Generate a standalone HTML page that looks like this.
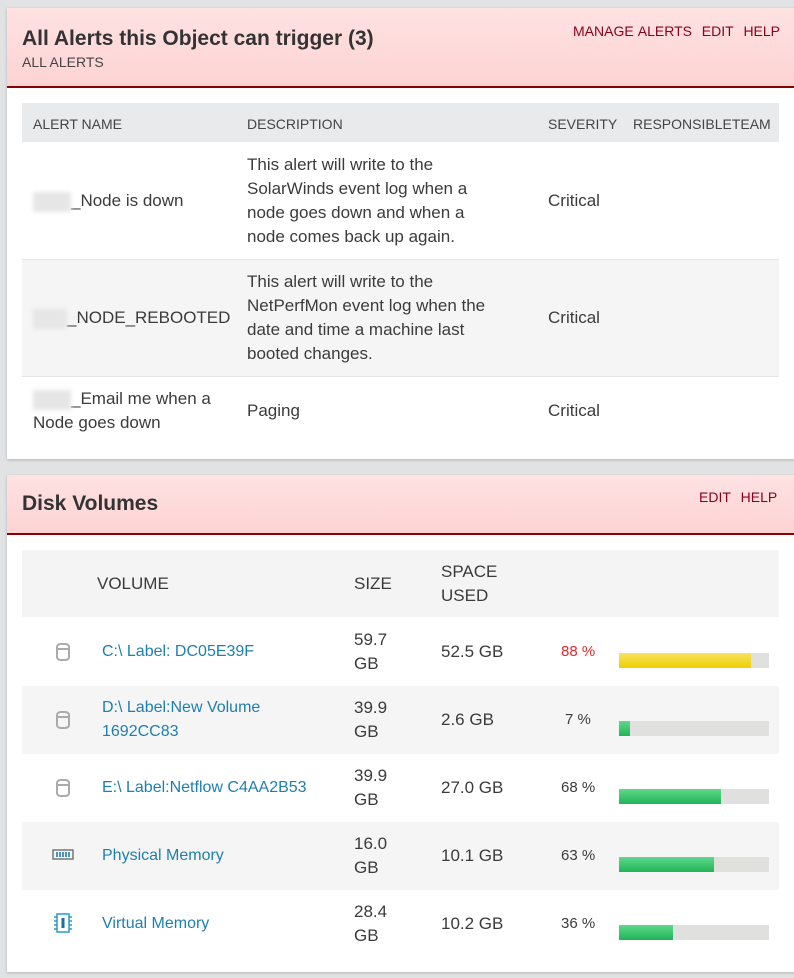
<!DOCTYPE html>
<html><head><meta charset="utf-8"><style>
*{margin:0;padding:0;box-sizing:border-box}
body{width:794px;height:978px;background:#e1e2e3;font-family:"Liberation Sans","DejaVu Sans",sans-serif;color:#3b3b3b;position:relative;overflow:hidden}
.panel{position:absolute;left:7px;width:800px;background:#fff;box-shadow:0 1px 3px rgba(0,0,0,.2)}
.hdr{position:absolute;left:0;top:0;width:100%;background:linear-gradient(#fee2e2,#fdd3d3);border-bottom:2px solid #8b0000}
.title{position:absolute;left:15px;font-weight:bold;font-size:21px;color:#333}
.sub{position:absolute;left:15px;top:46px;font-size:14px;color:#444}
.links{position:absolute;top:15px;font-size:14px;color:#8b0018;word-spacing:1px}
.abs{position:absolute}
.t{position:absolute;font-size:17px;line-height:24px}
.th{position:absolute;font-size:14px;color:#444}
.blur{display:inline-block;width:38px;height:20px;background:#e6e6e6;filter:blur(2px);vertical-align:middle}
a{color:#1e7fae;text-decoration:none}
.bar{position:absolute;left:612px;width:150px;height:15px;background:#e0e0de}
.bar i{display:block;height:100%}
.g{background:linear-gradient(#5fd88c,#20b457)}
.y{background:linear-gradient(#f6e262,#efd000)}
.cyl{position:absolute;left:49px;width:14px;height:18px;border:2px solid #aaa;border-radius:5px/4px}
.cyl:after{content:"";position:absolute;left:-2px;right:-2px;top:3px;border-top:2px solid #aaa}
</style></head><body>
<div class="panel" style="top:8px;height:451px">
 <div class="hdr" style="height:80px"></div>
 <div class="title" style="top:19px">All Alerts this Object can trigger (3)</div>
 <div class="sub">ALL ALERTS</div>
 <div class="links" style="left:566px">MANAGE ALERTS&nbsp; EDIT&nbsp; HELP</div>
 <div class="abs" style="left:15px;top:95px;width:757px;height:39px;background:#e9eaec"></div>
 <div class="th" style="left:26px;top:108px">ALERT NAME</div>
 <div class="th" style="left:240px;top:108px">DESCRIPTION</div>
 <div class="th" style="left:541px;top:108px">SEVERITY</div>
 <div class="th" style="left:626px;top:108px">RESPONSIBLETEAM</div>
 <div class="abs" style="left:15px;top:251px;width:757px;height:118px;background:#f5f5f5;border-top:1px solid #e6e6e6;border-bottom:1px solid #e6e6e6"></div>
 <div class="t" style="left:26px;top:181px"><span class="blur"></span>_Node is down</div>
 <div class="t" style="left:240px;top:145px">This alert will write to the<br>SolarWinds event log when a<br>node goes down and when a<br>node comes back up again.</div>
 <div class="t" style="left:541px;top:181px">Critical</div>
 <div class="t" style="left:26px;top:298px"><span class="blur" style="width:34px"></span>_NODE_REBOOTED</div>
 <div class="t" style="left:240px;top:262px">This alert will write to the<br>NetPerfMon event log when the<br>date and time a machine last<br>booted changes.</div>
 <div class="t" style="left:541px;top:298px">Critical</div>
 <div class="t" style="left:26px;top:379px"><span class="blur"></span>_Email me when a<br>Node goes down</div>
 <div class="t" style="left:240px;top:391px">Paging</div>
 <div class="t" style="left:541px;top:391px">Critical</div>
</div>
<div class="panel" style="top:475px;height:497px">
 <div class="hdr" style="height:60px"></div>
 <div class="title" style="top:17px">Disk Volumes</div>
 <div class="links" style="left:692px;top:14px">EDIT&nbsp; HELP</div>
 <div class="abs" style="left:15px;top:75px;width:757px;height:67px;background:#f4f4f4"></div>
 <div class="t" style="left:90px;top:97px">VOLUME</div>
 <div class="t" style="left:347px;top:97px">SIZE</div>
 <div class="t" style="left:434px;top:85px">SPACE<br>USED</div>
 <div class="abs" style="left:15px;top:211px;width:757px;height:68px;background:#f5f5f5"></div>
 <div class="abs" style="left:15px;top:347px;width:757px;height:68px;background:#f5f5f5"></div>

 <div class="cyl" style="top:168px"></div>
 <div class="t" style="left:95px;top:165px;font-size:16px"><a>C:\ Label: DC05E39F</a></div>
 <div class="t" style="left:347px;top:153px">59.7<br>GB</div>
 <div class="t" style="left:434px;top:165px">52.5 GB</div>
 <div class="t" style="left:554px;top:165px;font-size:15px;color:#e8262d">88 %</div>
 <div class="bar" style="top:178px"><i class="y" style="width:88%"></i></div>

 <div class="cyl" style="top:236px"></div>
 <div class="t" style="left:95px;top:221px;font-size:16px"><a>D:\ Label:New Volume<br>1692CC83</a></div>
 <div class="t" style="left:347px;top:221px">39.9<br>GB</div>
 <div class="t" style="left:434px;top:233px">2.6 GB</div>
 <div class="t" style="left:558px;top:233px;font-size:15px">7 %</div>
 <div class="bar" style="top:246px"><i class="g" style="width:7%"></i></div>

 <div class="cyl" style="top:304px"></div>
 <div class="t" style="left:95px;top:301px;font-size:16px"><a>E:\ Label:Netflow C4AA2B53</a></div>
 <div class="t" style="left:347px;top:289px">39.9<br>GB</div>
 <div class="t" style="left:434px;top:301px">27.0 GB</div>
 <div class="t" style="left:554px;top:301px;font-size:15px">68 %</div>
 <div class="bar" style="top:314px"><i class="g" style="width:68%"></i></div>

 <svg class="abs" style="left:45px;top:374px" width="22" height="12"><rect x="1" y="1" width="20" height="9" fill="none" stroke="#777" stroke-width="1.5"/><path d="M5 3v5M8 3v5M11 3v5M14 3v5M17 3v5" stroke="#1e7fae" stroke-width="1.6"/></svg>
 <div class="t" style="left:95px;top:369px;font-size:16px"><a>Physical Memory</a></div>
 <div class="t" style="left:347px;top:357px">16.0<br>GB</div>
 <div class="t" style="left:434px;top:369px">10.1 GB</div>
 <div class="t" style="left:554px;top:369px;font-size:15px">63 %</div>
 <div class="bar" style="top:382px"><i class="g" style="width:63%"></i></div>

 <svg class="abs" style="left:45px;top:438px" width="22" height="20"><path d="M2 4h3M2 8h3M2 12h3M2 16h3M17 4h3M17 8h3M17 12h3M17 16h3" stroke="#2a9ac6" stroke-width="1.5"/><rect x="5" y="1" width="12" height="18" fill="none" stroke="#2a9ac6" stroke-width="1.5"/><rect x="9.5" y="5" width="3" height="10" fill="#1e6f99"/></svg>
 <div class="t" style="left:95px;top:437px;font-size:16px"><a>Virtual Memory</a></div>
 <div class="t" style="left:347px;top:425px">28.4<br>GB</div>
 <div class="t" style="left:434px;top:437px">10.2 GB</div>
 <div class="t" style="left:554px;top:437px;font-size:15px">36 %</div>
 <div class="bar" style="top:450px"><i class="g" style="width:36%"></i></div>
</div>
</body></html>
